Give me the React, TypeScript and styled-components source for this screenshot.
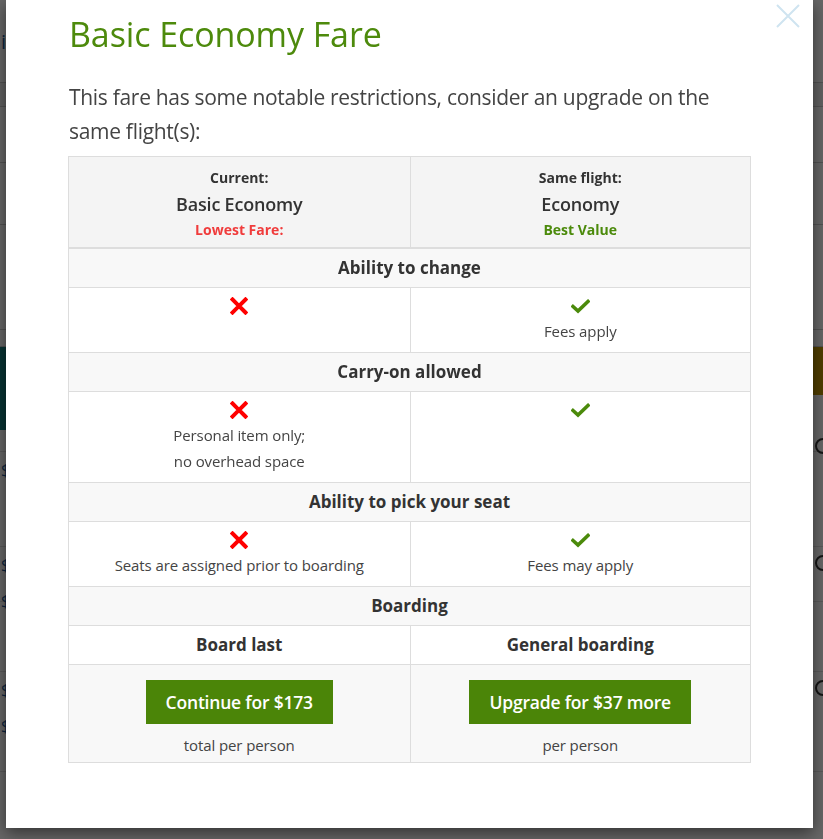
import React from 'react';
import styled, { createGlobalStyle } from 'styled-components';

const GlobalStyle = createGlobalStyle`
  html, body {
    margin: 0;
    padding: 0;
    height: 100%;
    overflow: hidden;
  }
  body {
    font-family: "Open Sans", "Noto Sans", Arial, sans-serif;
    color: #333;
    background: #fff;
  }
  * { box-sizing: border-box; }
`;

const GREEN = '#4b8a0b';

type Cell = { ok: boolean; notes?: string[] };
type Feature = { title: string; current: Cell; upgrade: Cell };

const features: Feature[] = [
  {
    title: 'Ability to change',
    current: { ok: false },
    upgrade: { ok: true, notes: ['Fees apply'] },
  },
  {
    title: 'Carry-on allowed',
    current: { ok: false, notes: ['Personal item only;', 'no overhead space'] },
    upgrade: { ok: true },
  },
  {
    title: 'Ability to pick your seat',
    current: { ok: false, notes: ['Seats are assigned prior to boarding'] },
    upgrade: { ok: true, notes: ['Fees may apply'] },
  },
];

const CrossIcon = () => (
  <svg width="18" height="18" viewBox="0 0 18 18">
    <path d="M2.5 2.5 L15.5 15.5 M15.5 2.5 L2.5 15.5" stroke="#f00" strokeWidth="4" strokeLinecap="square" />
  </svg>
);

const CheckIcon = () => (
  <svg width="19" height="15" viewBox="0 0 19 15">
    <path d="M2 7.5 L7 12 L17 2.5" stroke={GREEN} strokeWidth="3.6" fill="none" strokeLinecap="square" />
  </svg>
);

const CloseIcon = () => (
  <svg width="26" height="24" viewBox="0 0 26 24">
    <path d="M2 1 L24 23 M24 1 L2 23" stroke="#cfe4f0" strokeWidth="2" />
  </svg>
);

// rough shape of the results page behind the dialog
const bgRows = [24, 56, 62, 105, 17];
const flights = [
  { h: 22, radio: true, prices: 0 },
  { h: 95, radio: false, prices: 1 },
  { h: 55, radio: true, prices: 2 },
  { h: 70, radio: false, prices: 0 },
  { h: 100, radio: true, prices: 2 },
];

export default function App() {
  return (
    <>
      <GlobalStyle />
      <BackPage>
        <BackHeader>
          <BackLink>i</BackLink>
        </BackHeader>
        {bgRows.map((h, i) => (
          <BackRow key={i} $h={h} $shaded={i === 0} />
        ))}
        <Banner>
          <TealStrip />
          <GoldButton />
        </Banner>
        {flights.map((f, i) => (
          <FlightRow key={i} $h={f.h}>
            <PriceList>
              {Array.from({ length: f.prices }).map((_, j) => (
                <Price key={j}>$</Price>
              ))}
            </PriceList>
            {f.radio && <Radio />}
          </FlightRow>
        ))}
      </BackPage>

      <Overlay>
        <Modal>
          <CloseButton aria-label="Close">
            <CloseIcon />
          </CloseButton>
          <Title>Basic Economy Fare</Title>
          <Lead>
            This fare has some notable restrictions, consider an upgrade on the same flight(s):
          </Lead>

          <Table>
            <HeadRow>
              <HeadCell>
                <HeadLabel>Current:</HeadLabel>
                <FareName>Basic Economy</FareName>
                <FareTag $tone="red">Lowest Fare:</FareTag>
              </HeadCell>
              <HeadCell>
                <HeadLabel>Same flight:</HeadLabel>
                <FareName>Economy</FareName>
                <FareTag $tone="green">Best Value</FareTag>
              </HeadCell>
            </HeadRow>

            {features.map((f) => (
              <React.Fragment key={f.title}>
                <SectionRow>{f.title}</SectionRow>
                <Row>
                  {[f.current, f.upgrade].map((c, i) => (
                    <Cell key={i}>
                      <IconLine>{c.ok ? <CheckIcon /> : <CrossIcon />}</IconLine>
                      {c.notes?.map((n) => (
                        <Note key={n}>{n}</Note>
                      ))}
                    </Cell>
                  ))}
                </Row>
              </React.Fragment>
            ))}

            <SectionRow>Boarding</SectionRow>
            <Row>
              <BoardCell>Board last</BoardCell>
              <BoardCell>General boarding</BoardCell>
            </Row>
            <Row $shaded>
              <ActionCell>
                <GreenButton>Continue for $173</GreenButton>
                <Note>total per person</Note>
              </ActionCell>
              <ActionCell>
                <GreenButton>Upgrade for $37 more</GreenButton>
                <Note>per person</Note>
              </ActionCell>
            </Row>
          </Table>
        </Modal>
      </Overlay>
    </>
  );
}

const BackPage = styled.div`
  width: 100%;
  height: 839px;
  overflow: hidden;
  background: #fff;
`;

const BackHeader = styled.div`
  height: 83px;
  padding: 28px 0 0 1px;
  border-bottom: 1px solid #ccc;
`;

const BackLink = styled.span`
  font-size: 20px;
  color: #1a5a9a;
`;

const BackRow = styled.div<{ $h: number; $shaded?: boolean }>`
  height: ${(p) => p.$h}px;
  background: ${(p) => (p.$shaded ? '#f1f1f1' : '#fff')};
  border-bottom: 1px solid #ccc;
`;

const Banner = styled.div`
  height: 83px;
  display: flex;
  justify-content: space-between;
  align-items: flex-start;
`;

const TealStrip = styled.div`
  width: 600px;
  height: 83px;
  background: #127d7d;
`;

const GoldButton = styled.div`
  width: 120px;
  height: 48px;
  background: #c79a00;
`;

const FlightRow = styled.div<{ $h: number }>`
  height: ${(p) => p.$h}px;
  display: flex;
  align-items: flex-start;
  justify-content: space-between;
  padding-top: 8px;
  border-bottom: 1px solid #ddd;
`;

const PriceList = styled.div`
  display: flex;
  flex-direction: column;
  gap: 16px;
  padding-left: 1px;
`;

const Price = styled.span`
  font-size: 16px;
  line-height: 20px;
  color: #1a5a9a;
`;

const Radio = styled.span`
  width: 16px;
  height: 16px;
  margin-right: -8px;
  border: 2px solid #333;
  border-radius: 50%;
`;

const Overlay = styled.div`
  position: fixed;
  inset: 0;
  background: rgba(0, 0, 0, 0.6);
`;

const Modal = styled.div`
  position: absolute;
  left: 6px;
  top: 0;
  width: 807px;
  background: #fff;
  padding: 14px 62px 65px 62px;
  box-shadow: 0 5px 15px rgba(0, 0, 0, 0.5);
`;

const CloseButton = styled.button`
  position: absolute;
  top: 4px;
  right: 12px;
  padding: 0;
  border: 0;
  background: none;
  line-height: 0;
`;

const Title = styled.h1`
  margin: 0 0 0 1px;
  font-size: 34px;
  line-height: 40px;
  font-weight: 500;
  color: #4d8a0c;
  letter-spacing: -0.1px;
`;

const Lead = styled.p`
  margin: 26px 0 8px 1px;
  font-size: 21px;
  line-height: 34px;
  font-weight: 400;
  color: #444;
  letter-spacing: -0.3px;
`;

const Table = styled.div`
  border: 1px solid #ddd;
  display: flex;
  flex-direction: column;
  text-align: center;
`;

const Row = styled.div<{ $shaded?: boolean }>`
  display: grid;
  grid-template-columns: 1fr 1fr;
  border-bottom: 1px solid #ddd;
  background: ${(p) => (p.$shaded ? '#f8f8f8' : '#fff')};

  &:last-child {
    border-bottom: 0;
  }

  & > * + * {
    border-left: 1px solid #ddd;
  }
`;

const HeadRow = styled(Row)`
  background: #f4f4f4;
  border-bottom: 2px solid #ddd;
`;

const HeadCell = styled.div`
  padding: 8px 8px 4px;
`;

const HeadLabel = styled.div`
  font-size: 14px;
  line-height: 26px;
  font-weight: 700;
  color: #333;
`;

const FareName = styled.div`
  font-size: 18px;
  line-height: 26px;
  font-weight: 600;
  color: #333;
  letter-spacing: -0.2px;
`;

const FareTag = styled.div<{ $tone: 'red' | 'green' }>`
  font-size: 14px;
  line-height: 26px;
  font-weight: 700;
  color: ${(p) => (p.$tone === 'red' ? '#f03c3c' : GREEN)};
`;

const SectionRow = styled.div`
  padding: 7px 8px;
  font-size: 17px;
  line-height: 24px;
  font-weight: 700;
  color: #333;
  background: #f8f8f8;
  border-bottom: 1px solid #ddd;
`;

const Cell = styled.div`
  padding: 6px 8px 8px;
`;

const IconLine = styled.div`
  height: 24px;
  display: flex;
  align-items: center;
  justify-content: center;
`;

const Note = styled.div`
  font-size: 15px;
  line-height: 26px;
  color: #444;
  letter-spacing: -0.1px;
`;

const BoardCell = styled.div`
  padding: 7px 8px 7px;
  font-size: 17px;
  line-height: 24px;
  font-weight: 700;
  color: #333;
`;

const ActionCell = styled.div`
  padding: 15px 8px 4px;
  display: flex;
  flex-direction: column;
  align-items: center;
  gap: 8px;
`;

const GreenButton = styled.button`
  height: 44px;
  padding: 0 20px;
  border: 0;
  border-radius: 0;
  background: #4b8508;
  color: #fff;
  font-family: inherit;
  font-size: 17.5px;
  font-weight: 600;
  letter-spacing: -0.2px;
`;
